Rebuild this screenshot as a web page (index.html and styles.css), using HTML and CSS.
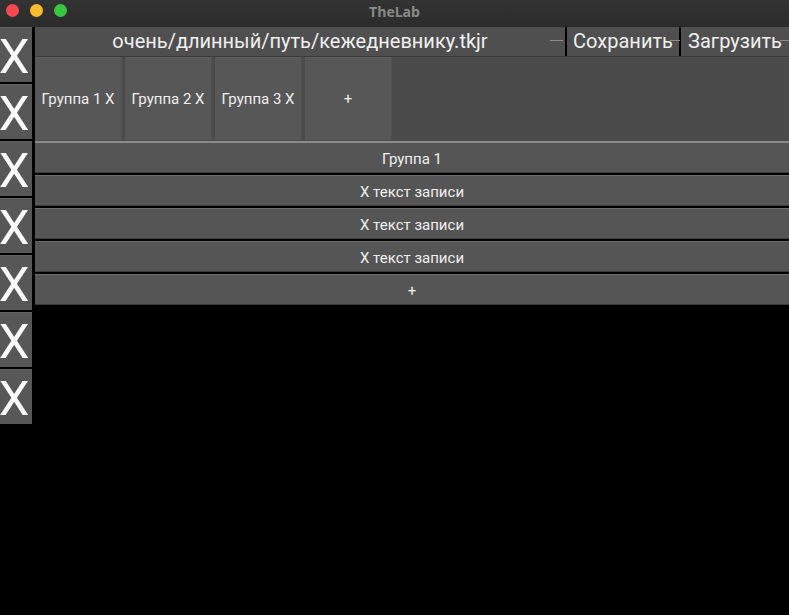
FILE: index.html
```html
<!DOCTYPE html>
<html>
<head>
<meta charset="utf-8">
<link rel="stylesheet" href="styles.css">
</head>
<body>
<div class="window">
  <div class="titlebar">
    <div class="lights">
      <span class="light red"></span>
      <span class="light yellow"></span>
      <span class="light green"></span>
    </div>
    <div class="title">TheLab</div>
  </div>
  <div class="app">
    <div class="side">
      <div class="xbtn">X</div>
      <div class="xbtn">X</div>
      <div class="xbtn">X</div>
      <div class="xbtn">X</div>
      <div class="xbtn">X</div>
      <div class="xbtn">X</div>
      <div class="xbtn">X</div>
    </div>
    <div class="main">
      <div class="topbar">
        <div class="seg path">очень/длинный/путь/кежедневнику.tkjr</div>
        <div class="seg save">Сохранить</div>
        <div class="seg load">Загрузить</div>
      </div>
      <div class="tabs">
        <div class="tab">Группа 1 X</div>
        <div class="tab">Группа 2 X</div>
        <div class="tab">Группа 3 X</div>
        <div class="tab">+</div>
      </div>
      <div class="rows">
        <div class="row">Группа 1</div>
        <div class="row">Х текст записи</div>
        <div class="row">Х текст записи</div>
        <div class="row">Х текст записи</div>
        <div class="row">+</div>
      </div>
    </div>
  </div>
</div>
</body>
</html>
```

FILE: styles.css
```css
html, body {
  margin: 0;
  padding: 0;
  background: #000;
}
.window {
  width: 789px;
  height: 615px;
  background: #000;
  overflow: hidden;
  font-family: Roboto, "Noto Sans", sans-serif;
  color: #ececec;
}
.titlebar {
  height: 27px;
  background: linear-gradient(#333333, #2b2b2b);
  display: flex;
  align-items: center;
  justify-content: center;
  position: relative;
}
.lights {
  position: absolute;
  left: 6px;
  top: 4px;
  display: flex;
  gap: 11px;
}
.light {
  width: 13px;
  height: 13px;
  border-radius: 50%;
  display: block;
}
.red { background: #f4484f; }
.yellow { background: #fbbb2d; }
.green { background: #3ac640; }
.title {
  font-family: "Open Sans", "DejaVu Sans", sans-serif;
  font-weight: 700;
  font-size: 14px;
  color: #8a8a8a;
  margin-top: -5px;
}
.app {
  display: flex;
  align-items: flex-start;
}
.side {
  width: 32px;
  display: flex;
  flex-direction: column;
  gap: 2px;
}
.xbtn {
  height: 55px;
  background: #575757;
  border-top: 1px solid #626262;
  box-sizing: border-box;
  font-size: 49px;
  color: #fafafa;
  display: flex;
  align-items: center;
  justify-content: center;
  padding-right: 4px;
  padding-top: 2px;
}
.main {
  flex: 1;
  margin-left: 3px;
  display: flex;
  flex-direction: column;
}
.topbar {
  height: 29px;
  display: flex;
  gap: 2px;
  background: #000;
  border-bottom: 1px solid #3a3a3a;
}
.seg {
  background: #4f4f4f;
  display: flex;
  align-items: center;
  justify-content: center;
  font-size: 20px;
  color: #f0f0f0;
  position: relative;
  padding-bottom: 1px;
  box-sizing: border-box;
}
.seg::after {
  content: "";
  position: absolute;
  right: 2px;
  top: 13px;
  width: 13px;
  height: 1px;
  background: #8c8c8c;
}
.path { width: 530px; }
.save { width: 112px; }
.save::after { width: 10px; right: -1px; }
.load { flex: 1; }
.load::after { width: 9px; right: 0; }
.tabs {
  height: 85px;
  background: #4b4b4b;
  display: flex;
  gap: 3px;
  border-bottom: 1px solid #8a8a8a;
  box-sizing: border-box;
}
.tab {
  width: 87px;
  height: 84px;
  background: #575757;
  border-top: 1px solid #5f5f5f;
  border-right: 1px solid #505050;
  border-bottom: 1px solid #505050;
  box-sizing: border-box;
  display: flex;
  align-items: center;
  justify-content: center;
  font-size: 15px;
  color: #efefef;
}
.rows {
  display: flex;
  flex-direction: column;
  gap: 2px;
}
.row {
  height: 31px;
  background: #555555;
  border-top: 1px solid #6e6e6e;
  border-bottom: 1px solid #3c3c3c;
  box-sizing: border-box;
  display: flex;
  align-items: center;
  justify-content: center;
  padding-top: 2px;
  font-size: 15px;
  color: #efefef;
}
.rows .row:first-child { border-top-color: #8a8a8a; }
```
